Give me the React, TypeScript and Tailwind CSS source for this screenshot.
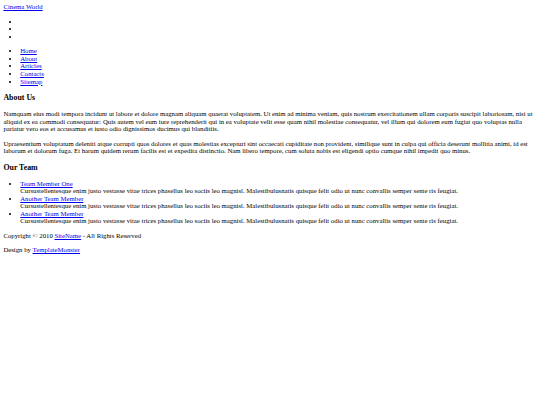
import React from "react";

const A = ({ children }: { children: React.ReactNode }) => (
  <a href="#" className="text-[#0000ee] underline">
    {children}
  </a>
);

const team = ["Team Member One", "Another Team Member", "Another Team Member"];
const desc =
  "Cursustellentesque enim justo vestasse vitae trices phasellus leo sociis leo magnisl. Malestibulusnatis quisque felit odio ut nunc convallis semper sente ris feugiat.";

export default function App() {
  return (
    <div className="min-h-[405px] bg-white p-[3.375px] font-['Liberation_Serif','Times_New_Roman',serif] text-[6.75px] leading-[7.6px] text-black">
      <div>
        <A>Cinema World</A>
      </div>
      <ul className="my-[6.75px] list-disc pl-[16.875px]">
        <li>&nbsp;</li>
        <li>&nbsp;</li>
        <li>&nbsp;</li>
      </ul>
      <ul className="my-[6.75px] list-disc pl-[16.875px]">
        <li><A>Home</A></li>
        <li><A>About</A></li>
        <li><A>Articles</A></li>
        <li><A>Contacts</A></li>
        <li><A>Sitemap</A></li>
      </ul>
      <h3 className="my-[7.9px] text-[7.9px] leading-[9px] font-bold">About Us</h3>
      <p className="my-[6.75px]">
        Namquam eius modi tempora incidunt ut labore et dolore magnam aliquam quaerat voluptatem. Ut enim ad minima veniam, quis nostrum exercitationem ullam corporis suscipit laboriosam, nisi ut aliquid ex ea commodi consequatur: Quis autem vel eum iure reprehenderit qui in ea voluptate velit esse quam nihil molestiae consequatur, vel illum qui dolorem eum fugiat quo voluptas nulla pariatur vero eos et accusamus et iusto odio dignissimos ducimus qui blanditiis.
      </p>
      <p className="my-[6.75px]">
        Upraesentium voluptatum deleniti atque corrupti quos dolores et quas molestias excepturi sint occaecati cupiditate non provident, similique sunt in culpa qui officia deserunt mollitia animi, id est laborum et dolorum fuga. Et harum quidem rerum facilis est et expedita distinctio. Nam libero tempore, cum soluta nobis est eligendi optio cumque nihil impedit quo minus.
      </p>
      <h3 className="my-[7.9px] text-[7.9px] leading-[9px] font-bold">Our Team</h3>
      <ul className="my-[6.75px] list-disc pl-[16.875px]">
        {team.map((t, i) => (
          <li key={i}>
            <A>{t}</A>
            <br />
            {desc}
          </li>
        ))}
      </ul>
      <p className="my-[6.75px]">
        Copyright © 2010 <A>SiteName</A> - All Rights Reserved
      </p>
      <p className="my-[6.75px]">
        Design by <A>TemplateMonster</A>
      </p>
    </div>
  );
}
